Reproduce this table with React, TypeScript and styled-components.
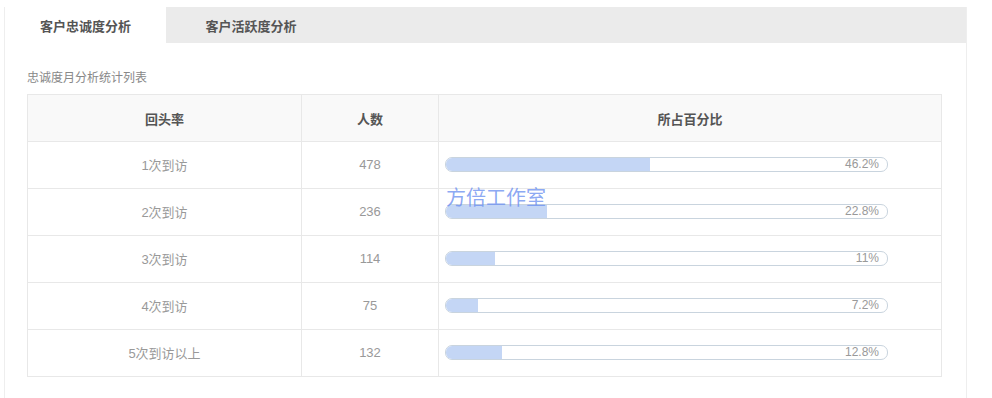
import React, { useState } from 'react'
import styled, { createGlobalStyle } from 'styled-components'

const GlobalStyle = createGlobalStyle`
  body {
    margin: 0;
    background: #fff;
    font-family: "Liberation Sans", "Noto Sans CJK SC", sans-serif;
  }
`

const Colors = {
  TabBar: '#ebebeb',
  Border: '#e8e8e8',
  Head: '#f9f9f9',
  TX1: '#555',
  TX2: '#999',
  Fill: '#c4d6f5',
  BarBorder: '#c9d4de'
}

const rows = [
  { label: '1次到访', count: 478, percent: 46.2 },
  { label: '2次到访', count: 236, percent: 22.8 },
  { label: '3次到访', count: 114, percent: 11 },
  { label: '4次到访', count: 75, percent: 7.2 },
  { label: '5次到访以上', count: 132, percent: 12.8 }
]

const Panel = styled.div`
  position: relative;
  margin: 7px 0 0 4px;
  width: 963px;
  border-left: 1px solid #eee;
  border-right: 1px solid #eee;
  min-height: 391px;
  box-sizing: border-box;
`

const TabBar = styled.div`
  display: flex;
  height: 36px;
  background: ${Colors.TabBar};
`

const Tab = styled.button<{ active: boolean; width: number }>`
  width: ${({ width }) => width}px;
  border: none;
  margin: 0;
  padding: 0;
  background: ${({ active }) => (active ? '#fff' : 'transparent')};
  font-family: inherit;
  font-size: 13px;
  font-weight: bold;
  color: ${Colors.TX1};
  cursor: pointer;
`

const Content = styled.div`
  padding: 26px 24px 0 22px;
`

const Caption = styled.div`
  font-size: 12px;
  line-height: 18px;
  color: #888;
  margin-bottom: 7px;
`

const Table = styled.table`
  width: 915px;
  border-collapse: collapse;
  table-layout: fixed;
`

const Th = styled.th`
  height: 46px;
  padding: 0;
  background: ${Colors.Head};
  border: 1px solid ${Colors.Border};
  font-size: 13px;
  font-weight: bold;
  color: ${Colors.TX1};
`

const Td = styled.td`
  height: 44px;
  border: 1px solid ${Colors.Border};
  text-align: center;
  font-size: 13px;
  color: ${Colors.TX2};
  padding: 0 0 2px;
`

const BarCell = styled(Td)`
  text-align: left;
  padding-left: 6px;
`

const Bar = styled.div`
  position: relative;
  width: 441px;
  height: 13px;
  border: 1px solid ${Colors.BarBorder};
  border-radius: 7px;
  overflow: hidden;
  background: #fff;
`

const Fill = styled.div`
  height: 100%;
  background: ${Colors.Fill};
`

const BarText = styled.span`
  position: absolute;
  right: 8px;
  top: 0;
  font-size: 12px;
  line-height: 13px;
  color: ${Colors.TX2};
`

const Watermark = styled.div`
  position: absolute;
  left: 441px;
  top: 179px;
  font-size: 20px;
  line-height: 24px;
  color: rgba(110, 145, 240, 0.8);
  pointer-events: none;
`

const App = () => {
  const [tab, setTab] = useState(0)

  return (
    <>
      <GlobalStyle />
      <Panel>
        <TabBar>
          <Tab active={tab === 0} width={161} onClick={() => setTab(0)}>
            客户忠诚度分析
          </Tab>
          <Tab active={tab === 1} width={170} onClick={() => setTab(1)}>
            客户活跃度分析
          </Tab>
        </TabBar>
        <Content>
          <Caption>忠诚度月分析统计列表</Caption>
          <Table>
            <colgroup>
              <col style={{ width: 274 }} />
              <col style={{ width: 137 }} />
              <col />
            </colgroup>
            <thead>
              <tr>
                <Th>回头率</Th>
                <Th>人数</Th>
                <Th>所占百分比</Th>
              </tr>
            </thead>
            <tbody>
              {rows.map((r) => (
                <tr key={r.label}>
                  <Td>{r.label}</Td>
                  <Td>{r.count}</Td>
                  <BarCell>
                    <Bar>
                      <Fill style={{ width: `${r.percent}%` }} />
                      <BarText>{r.percent}%</BarText>
                    </Bar>
                  </BarCell>
                </tr>
              ))}
            </tbody>
          </Table>
        </Content>
        <Watermark>方倍工作室</Watermark>
      </Panel>
    </>
  )
}

export default App
